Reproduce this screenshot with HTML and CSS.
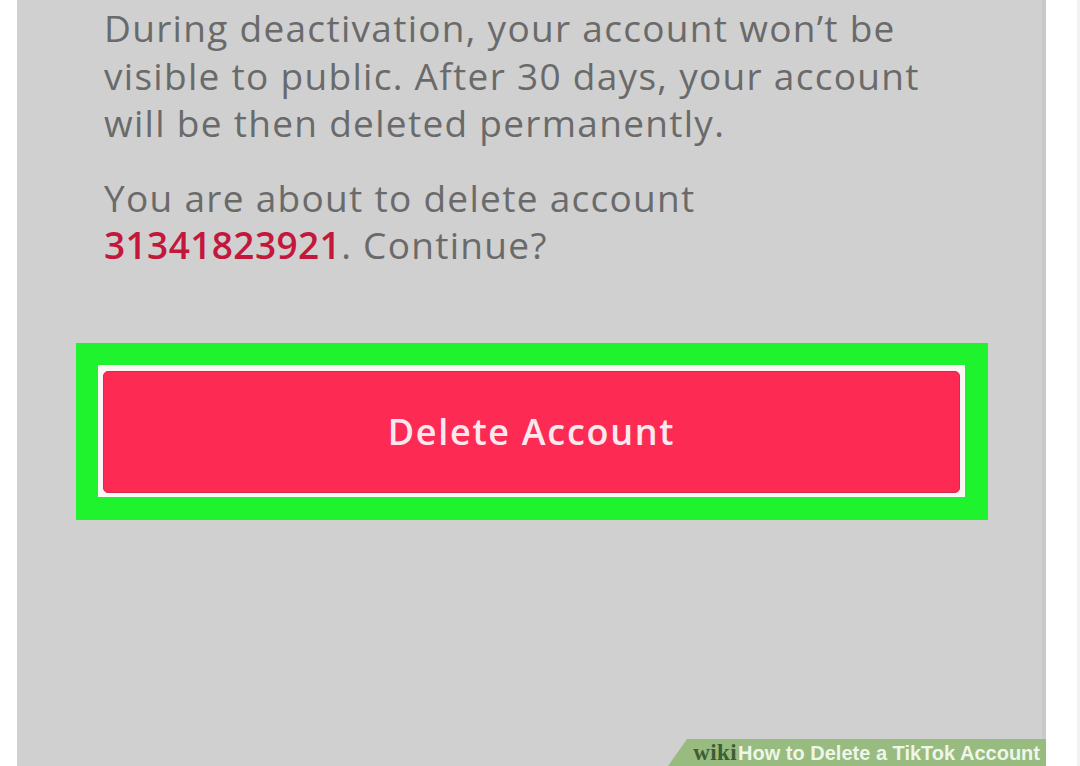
FILE: index.html
```html
<!DOCTYPE html>
<html>
<head>
<meta charset="utf-8">
<link rel="stylesheet" href="styles.css">
</head>
<body>
<div class="page">
  <div class="panel">
    <p class="msg">During deactivation, your account won’t be<br>visible to public. After 30 days, your account<br>will be then deleted permanently.</p>
    <p class="msg confirm">You are about to delete account<br><span class="num">31341823921</span>. Continue?</p>
    <div class="highlight">
      <div class="frame">
        <button class="delete">Delete Account</button>
      </div>
    </div>
    <div class="banner"><span class="wiki">wiki</span><span class="title">How to Delete a TikTok Account</span></div>
  </div>
  <div class="side"></div>
</div>
</body>
</html>
```

FILE: styles.css
```css
html, body {
  margin: 0;
  padding: 0;
  background: #ffffff;
}
.page {
  display: flex;
  width: 1080px;
  height: 766px;
  overflow: hidden;
}
.panel {
  position: relative;
  margin-left: 17px;
  width: 1029px;
  height: 766px;
  background: #d0d0d0;
  box-shadow: inset -4px 0 0 #c9c9c9;
  overflow: hidden;
  padding-top: 4px;
  box-sizing: border-box;
}
.side {
  width: 31px;
  margin-left: auto;
  border-right: 3px solid #f2f2f2;
  box-sizing: border-box;
}
.msg {
  margin: 0 0 0 87px;
  width: 920px;
  white-space: nowrap;
  font-family: "Open Sans", "Noto Sans", sans-serif;
  font-size: 37px;
  letter-spacing: 1.3px;
  line-height: 47.5px;
  color: #6a6a6a;
}
.confirm {
  margin-top: 27px;
}
.num {
  color: #c3173b;
  font-weight: 600;
  letter-spacing: 0.4px;
}
.highlight {
  margin: 74px 0 0 59px;
  width: 912px;
  height: 177px;
  background: #1ff32e;
  padding: 22px 23px 23px 22px;
  box-sizing: border-box;
}
.frame {
  background: #fbf6f6;
  height: 100%;
  padding: 6px 5px 4px 5px;
  box-sizing: border-box;
}
.delete {
  display: block;
  width: 100%;
  height: 100%;
  border: 1px solid #d92a4c;
  border-radius: 5px;
  background: #fd2b53;
  color: #fbe8ee;
  font-family: "Open Sans", "Noto Sans", sans-serif;
  font-size: 36px;
  font-weight: 600;
  letter-spacing: 1.7px;
  padding: 0;
}
.banner {
  position: absolute;
  left: 651px;
  bottom: 0;
  width: 378px;
  height: 27px;
  background: #98bb80;
  clip-path: polygon(19px 0, 100% 0, 100% 100%, 0 100%);
  padding-right: 6px;
  box-sizing: border-box;
  display: flex;
  justify-content: flex-end;
  align-items: baseline;
  white-space: nowrap;
  line-height: 27px;
}
.wiki {
  font-family: "Liberation Serif", serif;
  font-weight: 700;
  font-size: 23px;
  color: #3f5c33;
  letter-spacing: 0.4px;
}
.title {
  font-family: "Liberation Sans", sans-serif;
  font-weight: 700;
  font-size: 20px;
  color: #eef6e9;
  margin-left: 1px;
}
```
